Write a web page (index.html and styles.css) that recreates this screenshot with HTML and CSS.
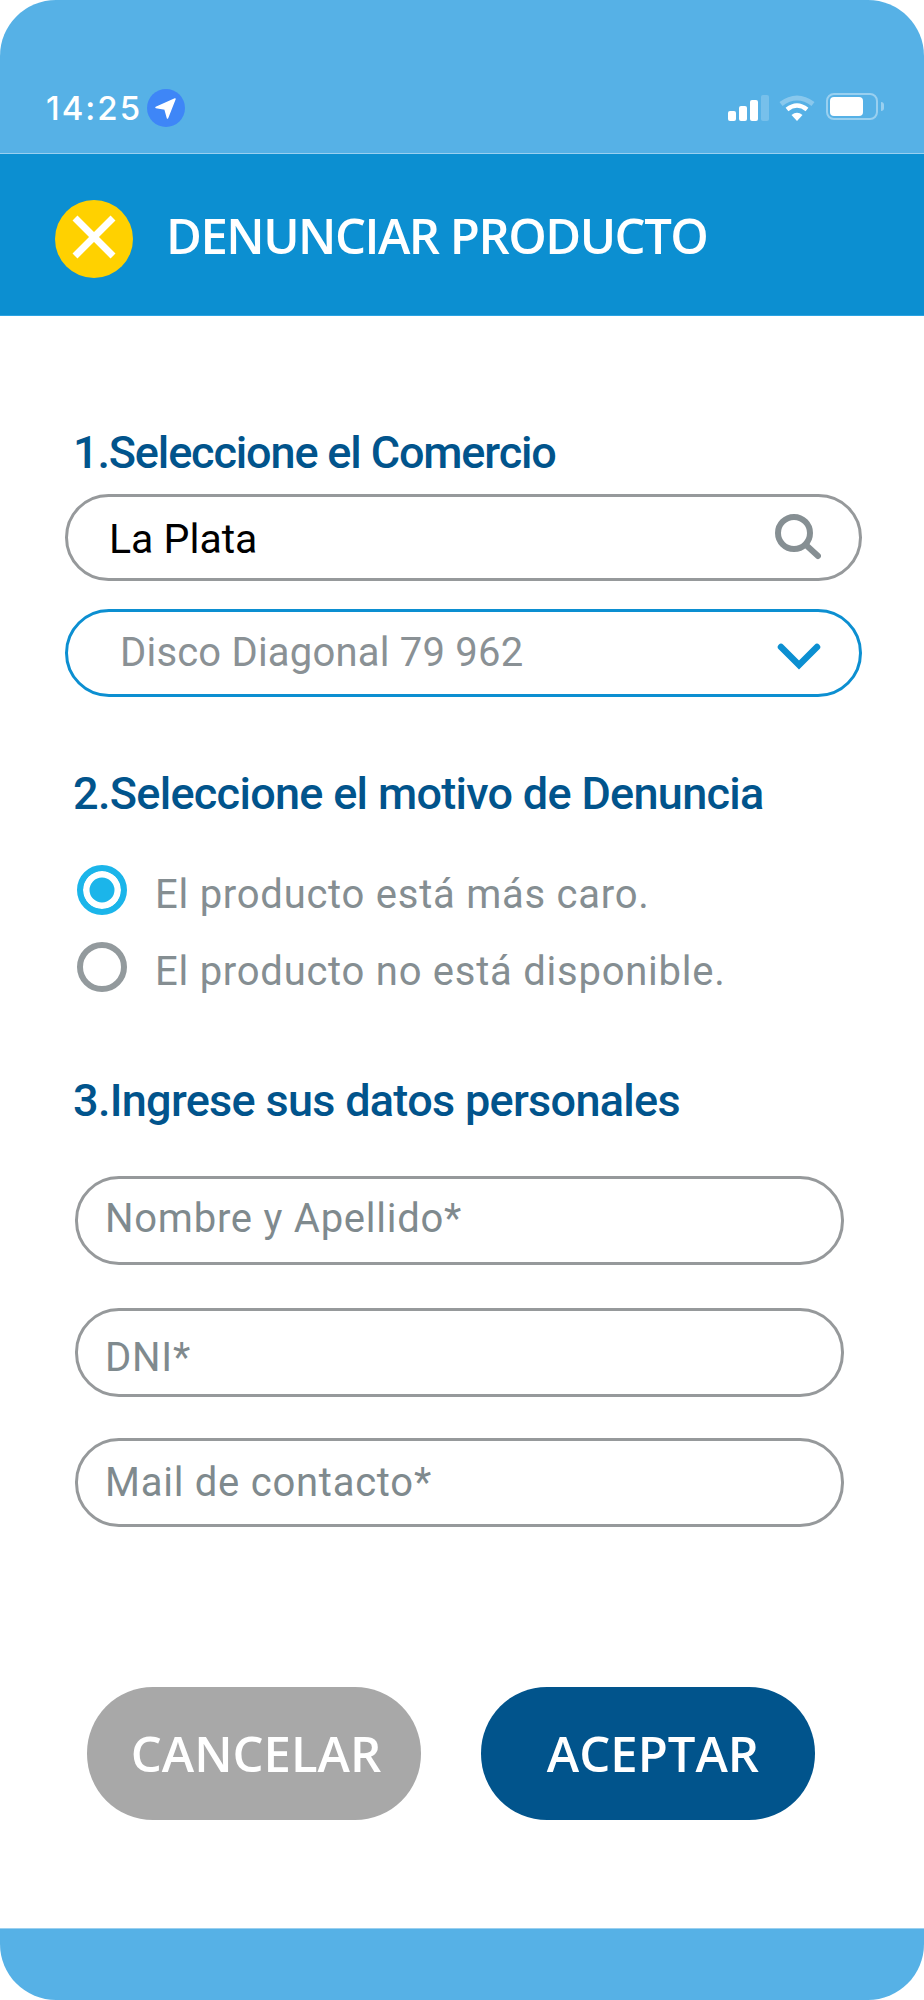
FILE: index.html
```html
<!DOCTYPE html>
<html lang="es">

<head>
	<meta charset="UTF-8">
	<meta name="viewport" content="width=device-width, initial-scale=1.0">
	<title>Denunciar producto</title>
	<link rel="stylesheet" href="styles.css">
</head>

<body>
	<div class="phone">
		<div class="status-bar">
			<div class="status-left">
				<span class="time">14:25</span>
				<svg class="nav-badge" width="38" height="38" viewBox="0 0 38 38">
					<circle cx="19" cy="19" r="19" fill="#3e86f7" />
					<path d="M28 10 L9 18.5 L18 20 L20.5 29 Z" fill="#fff" stroke="#fff" stroke-width="1.5" stroke-linejoin="round" />
				</svg>
			</div>
			<div class="status-right">
				<div class="signal">
					<span class="bar bar-1"></span>
					<span class="bar bar-2"></span>
					<span class="bar bar-3"></span>
					<span class="bar bar-4"></span>
				</div>
				<svg class="wifi" width="36" height="26" viewBox="0 0 36 26">
					<path d="M2 9 Q18 -3 34 9" fill="none" stroke="#fff" stroke-opacity="0.3" stroke-width="5" />
					<path d="M8 14.5 Q18 6.5 28 14.5" fill="none" stroke="#fff" stroke-width="4.5" />
					<path d="M12.5 20 L18 26 L23.5 20 Q18 15.5 12.5 20 Z" fill="#fff" />
				</svg>
				<div class="battery">
					<div class="battery-body"><span class="battery-level"></span></div>
					<span class="battery-nub"></span>
				</div>
			</div>
		</div>

		<header class="top-bar">
			<svg class="close-icon" width="78" height="78" viewBox="0 0 78 78">
				<circle cx="39" cy="39" r="39" fill="#ffd100" />
				<path d="M20 18 L58 56 M58 18 L20 56" stroke="#fff" stroke-width="7" />
			</svg>
			<h1>DENUNCIAR PRODUCTO</h1>
		</header>

		<main class="content">
			<h2 class="step step-first">1.Seleccione el Comercio</h2>
			<div class="pill search-field">
				<span class="search-value">La Plata</span>
				<svg width="46" height="50" viewBox="0 0 46 50">
					<circle cx="19" cy="20" r="16" fill="none" stroke="#868f93" stroke-width="6" />
					<path d="M31 32 L43 43" stroke="#868f93" stroke-width="6" stroke-linecap="round" />
				</svg>
			</div>
			<div class="pill select-field">
				<span class="select-value">Disco Diagonal 79 962</span>
				<svg class="chevron" width="44" height="28" viewBox="0 0 44 28">
					<path d="M4 5 L22 23 L40 5" fill="none" stroke="#0c8fd1" stroke-width="6.5" stroke-linecap="round" />
				</svg>
			</div>

			<h2 class="step step-second">2.Seleccione el motivo de Denuncia</h2>
			<div class="radio-list">
				<div class="radio-row">
					<span class="radio radio-on"></span>
					<span class="radio-label">El producto está más caro.</span>
				</div>
				<div class="radio-row">
					<span class="radio"></span>
					<span class="radio-label">El producto no está disponible.</span>
				</div>
			</div>

			<h2 class="step step-third">3.Ingrese sus datos personales</h2>
			<div class="fields">
				<div class="field field-name">Nombre y Apellido*</div>
				<div class="field field-dni">DNI*</div>
				<div class="field field-mail">Mail de contacto*</div>
			</div>

			<div class="actions">
				<button type="button" class="btn btn-cancel">CANCELAR</button>
				<button type="button" class="btn btn-accept">ACEPTAR</button>
			</div>
		</main>

		<footer class="bottom-bar"></footer>
	</div>
</body>

</html>
```

FILE: styles.css
```css
* {
	box-sizing: border-box;
}

body {
	margin: 0;
	background: #fff;
	font-family: 'Roboto', sans-serif;
}

.phone {
	display: flex;
	flex-direction: column;
	height: 2000px;
	background: #fff;
}

/* status bar */
.status-bar {
	display: flex;
	justify-content: space-between;
	align-items: flex-start;
	height: 154px;
	padding: 89px 40px 0 46px;
	background: #56b1e6;
	border-radius: 56px 56px 0 0;
	border-bottom: 1px solid #9ad0f0;
}

.status-left {
	display: flex;
	align-items: center;
	gap: 5px;
}

.time {
	font-family: 'Inter', sans-serif;
	font-size: 33px;
	line-height: 38px;
	font-weight: 500;
	letter-spacing: 2px;
	color: #fff;
}

.status-right {
	display: flex;
	align-items: flex-start;
	padding-top: 6px;
}

.signal {
	display: flex;
	align-items: flex-end;
	gap: 3px;
	height: 26px;
	margin-right: 10px;
}

.bar {
	width: 8px;
	background: #fff;
	border-radius: 2px;
}

.bar-1 {
	height: 10px;
}

.bar-2 {
	height: 15px;
}

.bar-3 {
	height: 21px;
}

.bar-4 {
	height: 26px;
	background: rgba(255, 255, 255, 0.2);
}

.wifi {
	margin-right: 11px;
}

.battery {
	display: flex;
	align-items: center;
	gap: 3px;
	margin-top: -2px;
}

.battery-body {
	width: 52px;
	height: 27px;
	padding: 2px;
	border: 2px solid rgba(255, 255, 255, 0.4);
	border-radius: 8px;
}

.battery-level {
	display: block;
	width: 33px;
	height: 19px;
	background: #fff;
	border-radius: 4px;
}

.battery-nub {
	width: 3px;
	height: 9px;
	background: rgba(255, 255, 255, 0.4);
	border-radius: 0 3px 3px 0;
}

/* header */
.top-bar {
	display: flex;
	align-items: center;
	gap: 33px;
	height: 162px;
	padding: 0 0 0 55px;
	background: #0c8fd1;
	border-bottom: 1px solid #2ba3e2;
}

.close-icon {
	margin-top: 8px;
}

.top-bar h1 {
	margin: 0;
	font-family: 'Open Sans', sans-serif;
	font-size: 49px;
	line-height: 60px;
	font-weight: 600;
	letter-spacing: -1.5px;
	color: #fff;
}

/* form */
.content {
	flex: 1;
	padding: 0;
}

.step {
	margin: 0 0 0 73px;
	font-size: 45px;
	line-height: 48px;
	font-weight: 500;
	letter-spacing: -0.7px;
	color: #01548c;
}

.step-first {
	margin-top: 113px;
	margin-bottom: 17px;
	letter-spacing: -1.15px;
}

.step-second {
	margin-top: 73px;
}

.step-third {
	margin-top: 75px;
}

.pill {
	display: flex;
	justify-content: space-between;
	align-items: center;
	width: 797px;
	margin-left: 65px;
	border: 3px solid #96999b;
	border-radius: 44px;
}

.search-field {
	height: 87px;
	padding: 0 38px 0 41px;
	margin-bottom: 28px;
}

.search-value {
	padding-top: 2px;
	font-size: 41px;
	color: #000;
}

.select-field {
	height: 88px;
	padding: 0 38px 0 52px;
	border-color: #0c8fd1;
}

.chevron {
	margin-top: 6px;
}

.select-value {
	padding-bottom: 2px;
	font-size: 40px;
	letter-spacing: 0.2px;
	color: #8a9195;
}

.radio-list {
	display: flex;
	flex-direction: column;
	gap: 17px;
	margin: 47px 0 0 77px;
}

.radio-row {
	display: flex;
	align-items: flex-start;
	gap: 28px;
}

.radio {
	flex: none;
	width: 50px;
	height: 50px;
	background: #fff;
	border: 6px solid #939a9d;
	border-radius: 50%;
}

.radio-on {
	border-color: #1bb5ea;
	box-shadow: inset 0 0 0 6.5px #fff;
	background: #1bb5ea;
}

.radio-label {
	font-size: 40px;
	line-height: 60px;
	letter-spacing: 0.75px;
	color: #858e92;
}

.fields {
	display: flex;
	flex-direction: column;
	gap: 42px;
	margin: 51px 0 0 75px;
	width: 769px;
}

.field {
	display: flex;
	align-items: center;
	height: 89px;
	padding: 0 27px;
	border: 3px solid #96999b;
	border-radius: 44px;
	font-size: 40px;
	letter-spacing: 0.75px;
	color: #7f8a8e;
}

.field-name {
	padding-bottom: 4px;
}

.field-dni {
	margin-top: 1px;
	padding-top: 10px;
}

.field-mail {
	margin-top: -1px;
}

.actions {
	display: flex;
	gap: 60px;
	margin: 160px 0 0 87px;
}

.btn {
	width: 334px;
	height: 133px;
	padding: 0 0 2px;
	border: none;
	border-radius: 66px;
	font-family: 'Open Sans', sans-serif;
	font-size: 49px;
	font-weight: 600;
	color: #fff;
}

.btn-cancel {
	padding-left: 4px;
	background: #a8a8a8;
}

.btn-accept {
	padding-left: 10px;
	background: #01548c;
}

.bottom-bar {
	height: 72px;
	background: #56b1e6;
	border-top: 1px solid #9ad0f0;
	border-radius: 0 0 56px 56px;
}
```
